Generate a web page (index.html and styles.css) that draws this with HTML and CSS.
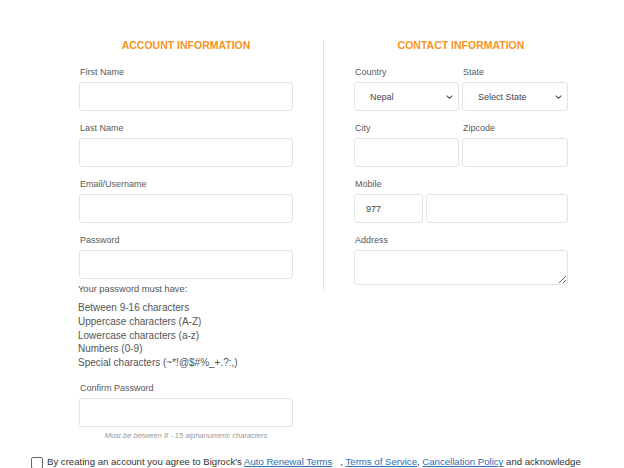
FILE: index.html
```html
<!DOCTYPE html>
<html>
<head>
<meta charset="utf-8">
<link rel="stylesheet" href="styles.css">
</head>
<body>
<div class="page">
  <div class="columns">
    <section class="col col-left">
      <h2 class="heading">ACCOUNT INFORMATION</h2>
      <div class="field">
        <label class="label">First Name</label>
        <input class="input" type="text">
      </div>
      <div class="field">
        <label class="label">Last Name</label>
        <input class="input" type="text">
      </div>
      <div class="field">
        <label class="label">Email/Username</label>
        <input class="input" type="text">
      </div>
      <div class="field field-tight">
        <label class="label">Password</label>
        <input class="input" type="password">
      </div>
      <p class="pw-title">Your password must have:</p>
      <ul class="pw-list">
        <li>Between 9-16 characters</li>
        <li>Uppercase characters (A-Z)</li>
        <li>Lowercase characters (a-z)</li>
        <li>Numbers (0-9)</li>
        <li>Special characters (~*!@$#%_+.?:,)</li>
      </ul>
      <div class="field field-confirm">
        <label class="label">Confirm Password</label>
        <input class="input" type="password">
        <p class="hint">Must be between 8 - 15 alphanumeric characters</p>
      </div>
    </section>
    <section class="col col-right">
      <h2 class="heading">CONTACT INFORMATION</h2>
      <div class="pair">
        <div class="field">
          <label class="label">Country</label>
          <div class="select-wrap">
            <select class="select"><option>Nepal</option></select>
            <svg class="chev" width="7" height="4" viewBox="0 0 7 4"><path d="M0.7 0.6l2.8 2.6 2.8-2.6" fill="none" stroke="#555" stroke-width="1.1"/></svg>
          </div>
        </div>
        <div class="field">
          <label class="label">State</label>
          <div class="select-wrap">
            <select class="select"><option>Select State</option></select>
            <svg class="chev" width="7" height="4" viewBox="0 0 7 4"><path d="M0.7 0.6l2.8 2.6 2.8-2.6" fill="none" stroke="#555" stroke-width="1.1"/></svg>
          </div>
        </div>
      </div>
      <div class="pair">
        <div class="field">
          <label class="label">City</label>
          <input class="input" type="text">
        </div>
        <div class="field">
          <label class="label">Zipcode</label>
          <input class="input" type="text">
        </div>
      </div>
      <div class="field">
        <label class="label">Mobile</label>
        <div class="mobile">
          <input class="input input-code" type="text" value="977">
          <input class="input input-num" type="text">
        </div>
      </div>
      <div class="field field-last">
        <label class="label">Address</label>
        <textarea class="textarea"></textarea>
      </div>
    </section>
  </div>
  <div class="terms">
    <input class="check" type="checkbox">
    <span class="terms-text">By creating an account you agree to Bigrock's <a href="#">Auto Renewal Terms</a> &nbsp; , <a href="#">Terms of Service</a>, <a href="#">Cancellation Policy</a> and acknowledge</span>
  </div>
</div>
</body>
</html>
```
FILE: styles.css
```css
* { box-sizing: border-box; }
html, body { margin: 0; padding: 0; background: #fff; }
body {
  font-family: "Liberation Sans", Arial, sans-serif;
  color: #555;
  overflow: hidden;
}
.page { padding-top: 39px; }
.columns { display: flex; align-items: flex-start; }
.col { width: 214px; }
.col-left { margin-left: 79px; margin-right: 30px; }
.col-right {
  width: 245px;
  border-left: 1px solid #e3e3e3;
  padding-left: 30px;
  padding-bottom: 5px;
  margin-top: 1px;
}
.col-right .heading { margin-top: -1px; }
.heading {
  margin: 0 0 15px;
  font-size: 10.5px;
  line-height: 12px;
  font-weight: bold;
  color: #f7931e;
  text-align: center;
}
.field { margin-bottom: 11px; }
.field-tight { margin-bottom: 0; }
.field-last { margin-bottom: 0; }
.label {
  display: block;
  font-size: 9px;
  line-height: 12px;
  margin-bottom: 4px;
  color: #5a5a5a;
  padding-left: 1px;
}
.input, .select, .textarea {
  display: block;
  width: 100%;
  height: 29px;
  border: 1px solid #e2e2e2;
  border-radius: 3px;
  background: #fff;
  font-family: "Liberation Sans", Arial, sans-serif;
  font-size: 9px;
  color: #444;
  outline: none;
  margin: 0;
}
.pw-title {
  margin: 4px 0 6px -1px;
  font-size: 9.3px;
  line-height: 12px;
  color: #555;
}
.pw-list {
  list-style: none;
  margin: 0 0 12px -1px;
  padding: 0;
  font-size: 10px;
  line-height: 13.75px;
  color: #555;
}
.field-confirm { margin-bottom: 0; }
.hint {
  margin: 4px 0 0;
  font-size: 7.5px;
  line-height: 9px;
  font-style: italic;
  color: #999;
  text-align: center;
}
.pair { display: flex; gap: 3px; }
.pair .field { width: 105px; }
.pair .field + .field { width: 106px; }
.select-wrap { position: relative; }
.select {
  -webkit-appearance: none;
  appearance: none;
  padding-left: 15px;
  font-size: 9px;
}
.chev { position: absolute; right: 6px; top: 13px; }
.mobile { display: flex; gap: 3px; }
.input-code { width: 69px; padding-left: 11px; }
.input-num { flex: 1; }
.textarea { height: 35px; resize: vertical; }
.terms {
  display: flex;
  align-items: center;
  margin-top: 16px;
  padding-left: 31px;
  white-space: nowrap;
}
.check {
  -webkit-appearance: none;
  appearance: none;
  width: 12px;
  height: 12px;
  border: 1px solid #666;
  border-radius: 2px;
  margin: 1px 4px 0 0;
  background: #fff;
}
.terms-text { font-size: 9.6px; line-height: 12px; color: #333; }
.terms-text a { color: #2b6cb0; text-decoration: underline; }
```
